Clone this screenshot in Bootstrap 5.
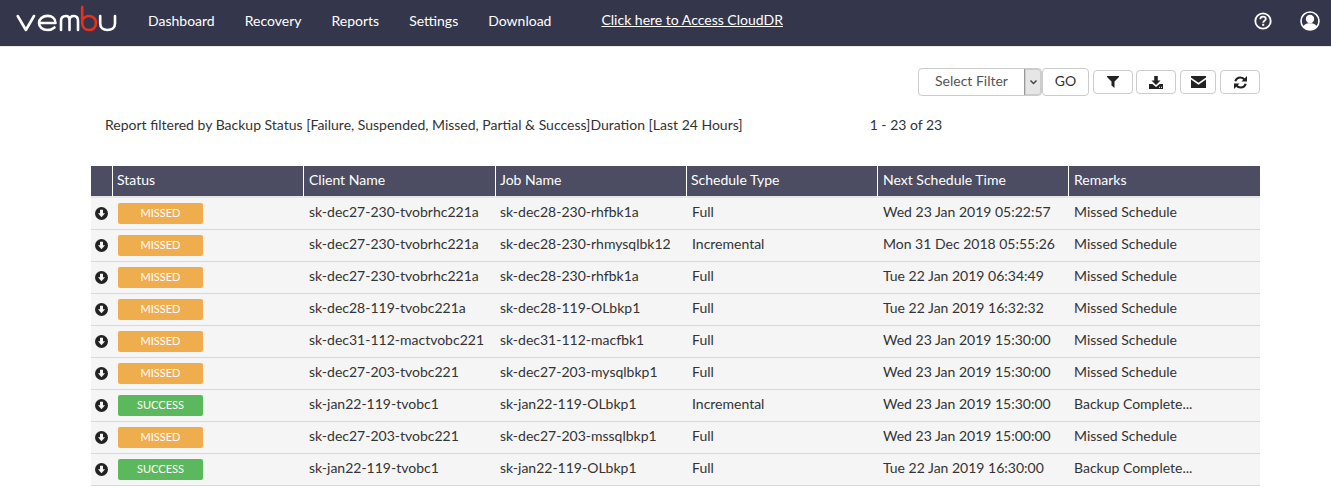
<!DOCTYPE html>
<html lang="en"><head><meta charset="utf-8"><title>Vembu</title>
<link href="https://cdn.jsdelivr.net/npm/bootstrap@5.3.0/dist/css/bootstrap.min.css" rel="stylesheet">
<style>
html,body{height:487px;overflow:hidden;background:#fff}
body{font-family:Lato,"Liberation Sans",sans-serif;font-size:14px;color:#333}
.topbar{height:47px;background:#34374c;border-bottom:1px solid #e8e8e8;padding:0 0 4px 15px}
.brand-mark{width:104px;height:34px;margin-right:29px;display:block}
.menu-link{color:#fff;font-size:14px;text-decoration:none;margin-right:30px;margin-bottom:2px}
.menu-link:hover{color:#fff}
.cloud-link{color:#fff;font-size:14px;text-decoration:underline;margin-left:20px;margin-bottom:4px}
.top-icons{margin-left:auto;gap:28px;padding-right:11px}
.tools{padding:21px 71px 0 0;height:70px;justify-content:flex-end}
.filter-box{width:124px;height:28px;border:1px solid #ccc;border-radius:4px;display:flex;align-items:stretch;padding:0;background:#fff;color:#555;font-size:14px}
.filter-label{flex:1;text-align:center;line-height:23px}
.filter-caret{width:17px;background:#e6e6e6;border-left:1px solid #999;border-radius:0 3px 3px 0;box-shadow:inset 0 0 0 1px #ccc;display:flex;align-items:center;justify-content:center}
.go-btn{width:47px;height:28px;border:1px solid #ccc;border-radius:4px;background:#fff;color:#333;font-size:14px;padding:0 0 4px;margin-right:4px}
.ico-btn{height:24px;width:40px;border:1px solid #ccc;border-radius:4px;background:#fff;padding:0;margin-left:3px;margin-top:2px;display:flex;align-items:center;justify-content:center}
.ico-first{margin-left:0}
.ico-mail{width:36px;margin-left:4px}
.ico-sync{margin-left:4px}
.summary{padding:0 0 0 105px;height:49px;line-height:16px;color:#333}
.summary-range{margin-left:127px}
.tbl-wrap{margin:0 71px 0 91px}
.jobs{width:1169px;table-layout:fixed;border-collapse:separate;border-spacing:0;margin:0}
.jobs th{background:#4c4d62;color:#fff;font-weight:400;font-size:14px;height:32px;padding:0 5px 4px;border-left:1px solid #fff;border-bottom:2px solid #e6e6e6;vertical-align:middle}
.jobs th:first-child{border-left:0}
.jobs th:nth-child(2),.jobs th:nth-child(4),.jobs th:nth-child(5){padding-left:4px}
.jobs td{background:#f5f5f5;color:#333;height:32px;padding:0 5px 5px 6px;border-bottom:1px solid #d9d9d9;vertical-align:middle;white-space:nowrap;overflow:hidden;font-size:14px}
.jobs td:nth-child(4){padding-left:5px}
.jobs td.arrow-cell{padding:9px 0 0 4px;vertical-align:top}
.jobs td.state-cell{padding:5px 0 0 6px;vertical-align:top}
.state{display:block;width:85px;height:21px;border-radius:2px;color:#fff;font-size:11px;line-height:19px;text-align:center}
.state-missed{background:#f0ad4e}
.state-success{background:#5cb85c}
.arrow{display:block}
</style></head><body>
<nav class="topbar d-flex align-items-center">
<svg class="brand-mark" viewBox="0 0 104 34" fill="none" stroke-width="2.600" stroke-linecap="round" stroke-linejoin="round" role="img" aria-label="vembu logo">
<path stroke="#fff" d="M2.700 12L10.900 26L19 12"/>
<path stroke="#fff" d="M24 19H40.500C40.500 14.500 37 11.900 32.500 11.900C27.500 11.900 24 15 24 19C24 23 27.500 26 32.500 26C35.500 26 37.800 25 39.500 23.500"/>
<path stroke="#fff" d="M46 26V17C46 13.500 48 12 51 12C53.500 12 54.500 13.500 54.500 16.500V26M54.500 16.500C54.500 13.500 56.500 12 59 12C62 12 63 14 63 17V26"/>
<path stroke="#e8301c" d="M67.200 3V19C67.200 23.500 70 26 74 26C78 26 81 23.500 81 19C81 15 78 12 74 12C71 12 69 13.500 67.200 16"/>
<path stroke="#fff" d="M85.200 12V19.500C85.200 23.500 88 26 92.500 26C97 26 100 23.500 100 19.500V12"/>
</svg>
<a class="menu-link" href="#">Dashboard</a>
<a class="menu-link" href="#">Recovery</a>
<a class="menu-link" href="#">Reports</a>
<a class="menu-link" href="#">Settings</a>
<a class="menu-link" href="#">Download</a>
<a class="cloud-link" href="#">Click here to Access CloudDR</a>
<div class="top-icons d-flex align-items-center">
<svg width="18" height="18" viewBox="0 0 18 18" fill="none"><circle cx="9" cy="9" r="7.700" stroke="#fff" stroke-width="1.800"/><path d="M6.300 7.200C6.300 5.600 7.500 4.700 9 4.700C10.600 4.700 11.800 5.600 11.800 7C11.800 8.800 9.200 8.800 9.200 10.700" stroke="#fff" stroke-width="1.800"/><rect x="8.200" y="11.800" width="2" height="2" fill="#fff"/></svg>
<svg width="20" height="20" viewBox="0 0 20 20"><circle cx="10" cy="10" r="9" fill="#34374c" stroke="#fff" stroke-width="1.600"/><circle cx="10" cy="8" r="4.200" fill="#fff"/><path d="M3 15.500C5 12.800 7.500 12.300 10 12.300C12.500 12.300 15 12.800 17 15.500C15.500 18 12.500 19 10 19C7.500 19 4.500 18 3 15.500Z" fill="#fff"/></svg>
</div>
</nav>
<div class="tools d-flex align-items-start">
<div class="filter-box"><span class="filter-label">Select Filter</span><span class="filter-caret"><svg width="9" height="6" viewBox="0 0 9 6" fill="none"><path d="M1.500 1.500L4.500 4.500L7.500 1.500" stroke="#444" stroke-width="1.500"/></svg></span></div>
<button class="go-btn" type="button">GO</button>
<button class="ico-btn ico-first" type="button" aria-label="Filter"><svg width="12" height="12" viewBox="0 0 12 12"><path d="M0 0H12V1L7.500 5.500V12L4.500 9.500V5.500L0 1Z" fill="#222"/></svg></button>
<button class="ico-btn" type="button" aria-label="Download"><svg width="14" height="13" viewBox="0 0 14 13"><path d="M5.200 0H8.800V4.500H11.500L7 9L2.500 4.500H5.200Z" fill="#222"/><path d="M0 8H3.500L7 11L10.500 8H14V13H0Z" fill="#222"/><rect x="10" y="10.800" width="1" height="1" fill="#fff"/><rect x="12" y="10.800" width="1" height="1" fill="#fff"/></svg></button>
<button class="ico-btn ico-mail" type="button" aria-label="Email"><svg width="15" height="12" viewBox="0 0 15 12"><path d="M0 0H15V1.500L7.500 6.800L0 1.500ZM0 3.600L7.500 8.800L15 3.600V12H0Z" fill="#222"/></svg></button>
<button class="ico-btn ico-sync" type="button" aria-label="Refresh"><svg width="13" height="13" viewBox="0 0 13 13" fill="none"><path d="M1.400 5.300C2 3 4 1.500 6.400 1.500C8.300 1.500 9.700 2.300 10.600 3.600" stroke="#222" stroke-width="2.200"/><path d="M13 0V5.500H7.500Z" fill="#222"/><path d="M11.600 7.700C11 10 9 11.500 6.600 11.500C4.700 11.500 3.300 10.700 2.400 9.400" stroke="#222" stroke-width="2.200"/><path d="M0 13V7.500H5.500Z" fill="#222"/></svg></button>
</div>
<div class="summary d-flex"><span>Report filtered by Backup Status [Failure, Suspended, Missed, Partial &amp; Success]Duration [Last 24 Hours]</span><span class="summary-range">1 - 23 of 23</span></div>
<div class="tbl-wrap">
<table class="table jobs">
<colgroup><col style="width:21px"><col style="width:191px"><col style="width:192px"><col style="width:191px"><col style="width:191px"><col style="width:191px"><col style="width:192px"></colgroup>
<thead><tr><th></th><th>Status</th><th>Client Name</th><th>Job Name</th><th>Schedule Type</th><th>Next Schedule Time</th><th>Remarks</th></tr></thead>
<tbody id="rows"></tbody>
</table>
</div>
<script>
const data=[
["m","sk-dec27-230-tvobrhc221a","sk-dec28-230-rhfbk1a","Full","Wed 23 Jan 2019 05:22:57","Missed Schedule"],
["m","sk-dec27-230-tvobrhc221a","sk-dec28-230-rhmysqlbk12","Incremental","Mon 31 Dec 2018 05:55:26","Missed Schedule"],
["m","sk-dec27-230-tvobrhc221a","sk-dec28-230-rhfbk1a","Full","Tue 22 Jan 2019 06:34:49","Missed Schedule"],
["m","sk-dec28-119-tvobc221a","sk-dec28-119-OLbkp1","Full","Tue 22 Jan 2019 16:32:32","Missed Schedule"],
["m","sk-dec31-112-mactvobc221","sk-dec31-112-macfbk1","Full","Wed 23 Jan 2019 15:30:00","Missed Schedule"],
["m","sk-dec27-203-tvobc221","sk-dec27-203-mysqlbkp1","Full","Wed 23 Jan 2019 15:30:00","Missed Schedule"],
["s","sk-jan22-119-tvobc1","sk-jan22-119-OLbkp1","Incremental","Wed 23 Jan 2019 15:30:00","Backup Complete..."],
["m","sk-dec27-203-tvobc221","sk-dec27-203-mssqlbkp1","Full","Wed 23 Jan 2019 15:00:00","Missed Schedule"],
["s","sk-jan22-119-tvobc1","sk-jan22-119-OLbkp1","Full","Tue 22 Jan 2019 16:30:00","Backup Complete..."]];
const arrow='<svg class="arrow" width="13" height="13" viewBox="0 0 13 13"><circle cx="6.500" cy="6.500" r="6.500" fill="#222"/><path d="M5 2.800H8V6.300H10L6.500 10.200L3 6.300H5Z" fill="#f5f5f5"/></svg>';
document.getElementById('rows').innerHTML=data.map(r=>`<tr><td class="arrow-cell">${arrow}</td><td class="state-cell"><span class="state ${r[0]=='m'?'state-missed':'state-success'}">${r[0]=='m'?'MISSED':'SUCCESS'}</span></td>${r.slice(1).map(c=>`<td>${c}</td>`).join('')}</tr>`).join('');
</script>
<script src="https://cdn.jsdelivr.net/npm/bootstrap@5.3.0/dist/js/bootstrap.bundle.min.js"></script>
</body></html>
